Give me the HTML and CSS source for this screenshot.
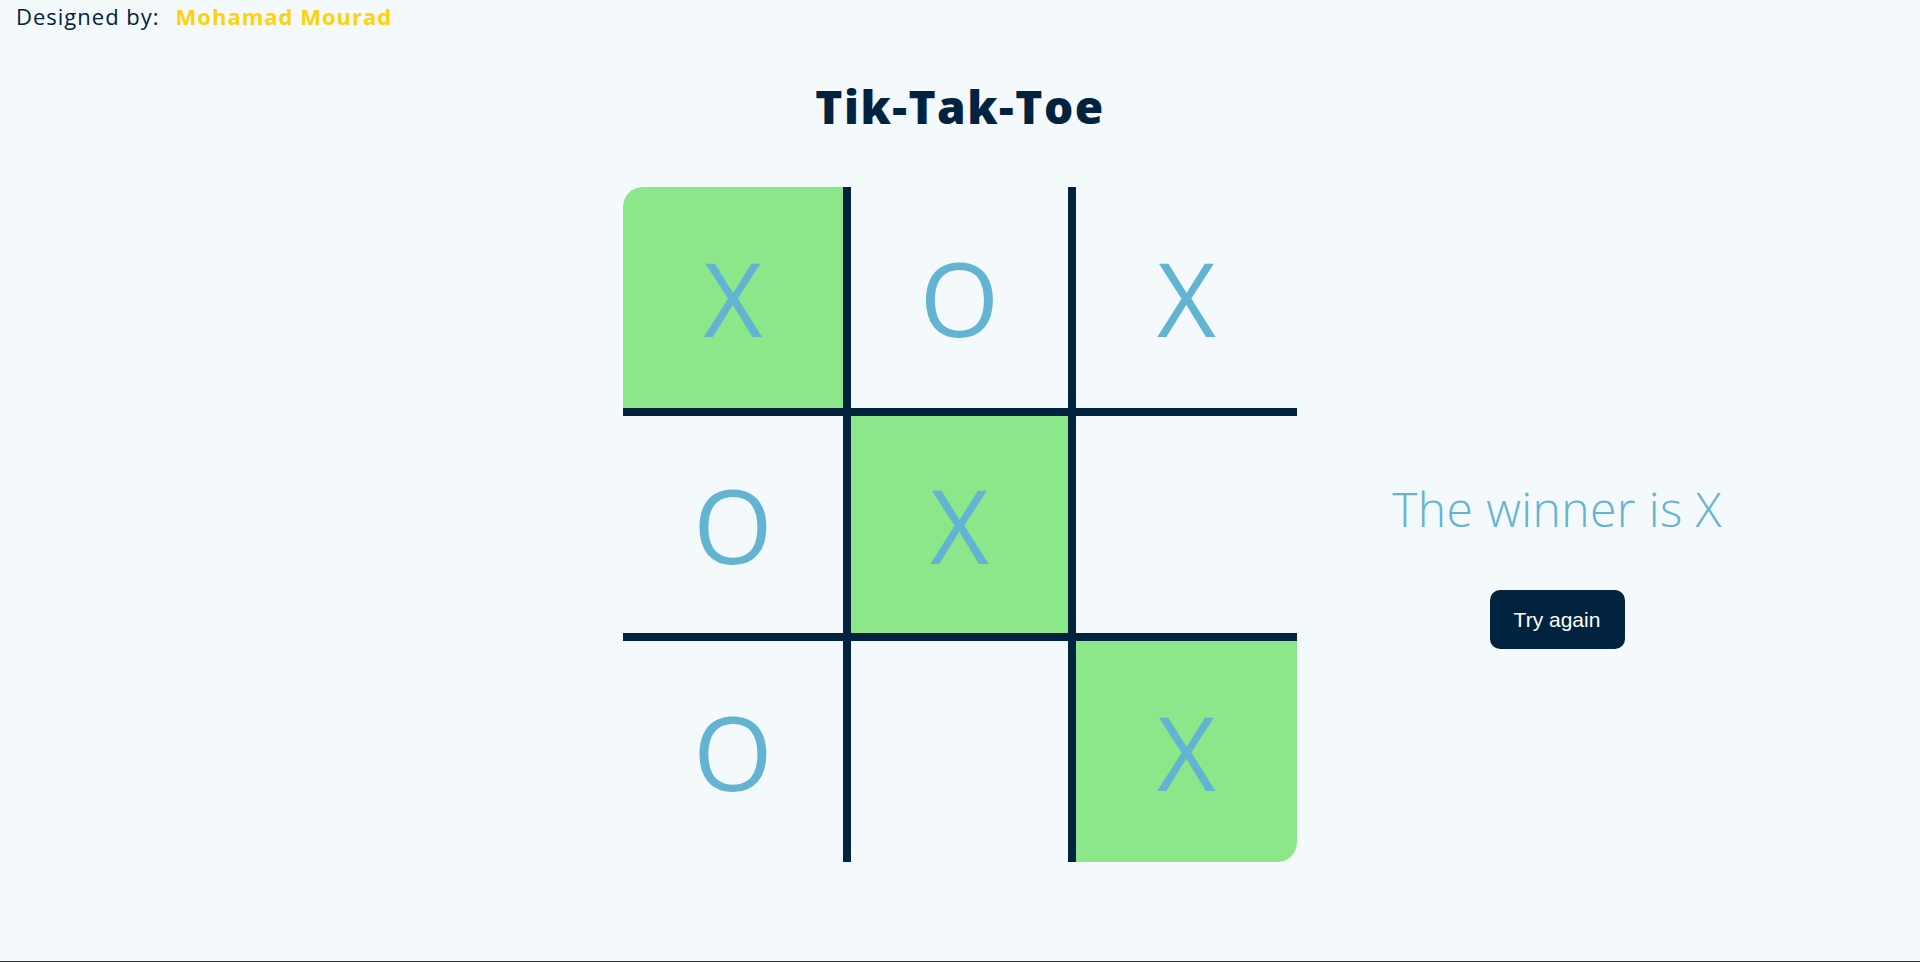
FILE: index.html
```html
<!DOCTYPE html>
<html lang="en">
<head>
<meta charset="utf-8">
<title>Tik-Tak-Toe</title>
<link rel="stylesheet" href="styles.css">
</head>
<body>
  <header class="credit">
    <span class="credit-label">Designed by:</span>
    <span class="credit-name">Mohamad Mourad</span>
  </header>
  <h1 class="title">Tik-Tak-Toe</h1>
  <main class="game">
    <div class="spacer"></div>
    <div class="board">
      <div class="cell win tl">X</div>
      <div class="cell col-mid">O</div>
      <div class="cell">X</div>
      <div class="cell row-mid">O</div>
      <div class="cell col-mid row-mid win">X</div>
      <div class="cell row-mid"></div>
      <div class="cell">O</div>
      <div class="cell col-mid"></div>
      <div class="cell win br">X</div>
    </div>
    <aside class="result">
      <p class="winner">The winner is X</p>
      <button class="retry" type="button">Try again</button>
    </aside>
  </main>
  <div class="edge"></div>
</body>
</html>
```
FILE: styles.css
```css
html, body {
  margin: 0;
  padding: 0;
}
body {
  background: #f4f9fc;
  color: #012340;
  font-family: "Open Sans", "Noto Sans", sans-serif;
  height: 962px;
  overflow: hidden;
}
.credit {
  display: flex;
  gap: 16px;
  padding: 0 16px;
  height: 32px;
  align-items: center;
  font-size: 22px;
  letter-spacing: 1px;
}
.credit-label {
  color: #012340;
}
.credit-name {
  color: #ffd20a;
  font-weight: 700;
}
.title {
  margin: 44px 0 0;
  text-align: center;
  font-size: 46px;
  letter-spacing: 1.5px;
  line-height: 60px;
  font-weight: 800;
  color: #012340;
}
.game {
  display: grid;
  grid-template-columns: 1fr 674px 1fr;
  margin-top: 51px;
}
.board {
  display: grid;
  grid-template-columns: 220px 233px 221px;
  grid-template-rows: 221px 233px 221px;
}
.cell {
  display: flex;
  align-items: center;
  justify-content: center;
  font-size: 102px;
  font-weight: 400;
  color: #63b4d2;
  line-height: 1;
  border: 0 solid #012340;
}
.col-mid {
  border-left-width: 8px;
  border-right-width: 8px;
}
.row-mid {
  border-top-width: 8px;
  border-bottom-width: 8px;
}
.win {
  background: #8ce78b;
}
.tl {
  border-top-left-radius: 20px;
}
.br {
  border-bottom-right-radius: 20px;
}
.result {
  margin-left: 80px;
  width: 360px;
  margin-top: 292px;
  display: flex;
  flex-direction: column;
  align-items: center;
}
.winner {
  margin: 0;
  font-size: 48px;
  letter-spacing: 0.4px;
  font-weight: 300;
  line-height: 60px;
  color: #63b4d2;
}
.retry {
  margin-top: 51px;
  width: 135px;
  height: 59px;
  border: none;
  border-radius: 10px;
  background: #012340;
  color: #ffffff;
  font-family: "Liberation Sans", Arial, sans-serif;
  font-size: 21px;
  cursor: pointer;
}
.edge {
  position: fixed;
  left: 0;
  right: 0;
  bottom: 0;
  height: 1px;
  background: #2b2f36;
}
```
